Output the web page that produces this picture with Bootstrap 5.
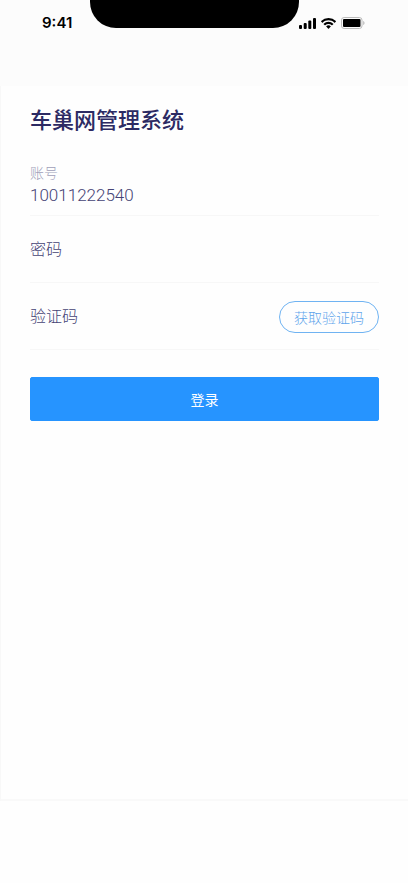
<!DOCTYPE html>
<html lang="zh-CN">
<head>
<meta charset="utf-8">
<meta name="viewport" content="width=device-width, initial-scale=1">
<title>车巢网管理系统</title>
<link href="https://cdn.jsdelivr.net/npm/bootstrap@5.3.0/dist/css/bootstrap.min.css" rel="stylesheet">
<style>
  body { font-family: "Noto Sans CJK SC", sans-serif; background: #fefefe; color: #454375; }
  .top-area { background: #fcfcfc; height: 86px; }
  .status-bar { padding: 12px 43px 0 42px; }
  .clock { font: 600 15px/22px Inter, sans-serif; color: #000; }
  .notch { width: 209px; height: 28px; left: 90px; background: #000; border-radius: 0 0 26px 26px; }
  .status-icons { gap: 5px; }
  .login-panel { padding: 16px 29px 0 29px; border-left: 1px solid #f8f8f8; border-bottom: 2px solid #f9f9f9; background: #fefefe; }
  .home-area { height: 82px; }
  .app-title { font-size: 22px; line-height: 32px; font-weight: 500; color: #2c2a63; margin-bottom: 15px; }
  .field-row { height: 67px; border-bottom: 1px solid #f7f7f7; font-weight: 300; font-size: 16px; line-height: 24px; padding-bottom: 3px; }
  .field-row label { flex: none; }
  .field-row .form-control { color: #454375; font-weight: 300; min-width: 0; box-shadow: none; }
  .field-row.account-row { padding-bottom: 8px; }
  .account-label { font-size: 14px; line-height: 22px; color: #a09fb9; }
  .field-row .account-input { font: 300 17px/24px Roboto, "Noto Sans CJK SC", sans-serif; }
  .code-btn { --bs-btn-color: #5ea5ec; --bs-btn-border-color: #6fb3f2; font-size: 14px; line-height: 20px; font-weight: 300; padding: 5px 14px; flex: none; }
  .login-btn { --bs-btn-bg: #2694ff; --bs-btn-border-color: #2694ff; --bs-btn-color: #fff; margin-top: 27px; height: 44px; font-size: 14px; line-height: 20px; font-weight: 400; border-radius: 2px; }
</style>
<script src="https://cdn.jsdelivr.net/npm/bootstrap@5.3.0/dist/js/bootstrap.bundle.min.js" defer></script>
</head>
<body>
<div class="d-flex flex-column min-vh-100">
  <header class="top-area position-relative">
    <div class="notch position-absolute top-0"></div>
    <div class="status-bar d-flex justify-content-between align-items-center">
      <span class="clock">9:41</span>
      <div class="status-icons d-flex align-items-center">
        <svg width="17" height="11" viewBox="0 0 17 11" aria-hidden="true"><rect x="0" y="7" width="3" height="4" rx="1"/><rect x="4.7" y="5" width="3" height="6" rx="1"/><rect x="9.3" y="2.6" width="3" height="8.4" rx="1"/><rect x="14" y="0" width="3" height="11" rx="1"/></svg>
        <svg width="15" height="11" viewBox="0 0 15.3 11" aria-hidden="true"><path d="M7.65 2.3c2.2 0 4.4.85 6 2.4.12.12.3.12.42 0l1.15-1.2a.33.33 0 0 0 0-.46 10.9 10.9 0 0 0-15.1 0 .33.33 0 0 0 0 .46l1.15 1.2c.12.12.3.12.42 0 1.6-1.55 3.76-2.4 5.96-2.4zm0 3.8c1.2 0 2.4.45 3.3 1.27.12.12.3.12.43 0l1.15-1.2a.34.34 0 0 0 0-.47 7.1 7.1 0 0 0-9.8 0 .34.34 0 0 0 0 .47l1.15 1.2c.12.12.31.12.43 0 .9-.82 2.1-1.27 3.34-1.27zm2.3 2.56a.33.33 0 0 0 0-.48 3.6 3.6 0 0 0-4.6 0 .33.33 0 0 0 0 .48l2.06 2.1a.33.33 0 0 0 .47 0z"/></svg>
        <svg width="24" height="12" viewBox="0 0 24 12" aria-hidden="true"><rect x=".5" y=".5" width="20.5" height="11" rx="2.6" fill="none" stroke="#bbb"/><rect x="2" y="2" width="17.5" height="8" rx="1"/><path d="M22.2 4v4c.8-.3 1.3-1.1 1.3-2s-.5-1.7-1.3-2z" fill="#bbb"/></svg>
      </div>
    </div>
  </header>
  <main class="login-panel flex-grow-1">
    <h1 class="app-title">车巢网管理系统</h1>
    <form>
      <div class="field-row account-row d-flex flex-column justify-content-end">
        <label class="account-label" for="account">账号</label>
        <input class="form-control account-input border-0 rounded-0 bg-transparent p-0" id="account" type="text" inputmode="numeric" value="10011222540">
      </div>
      <div class="field-row d-flex align-items-center">
        <label for="password">密码</label>
        <input class="form-control border-0 bg-transparent py-0" id="password" type="password">
      </div>
      <div class="field-row d-flex align-items-center">
        <label for="code">验证码</label>
        <input class="form-control border-0 bg-transparent py-0" id="code" type="text" inputmode="numeric">
        <button class="btn code-btn rounded-pill mt-1" type="button">获取验证码</button>
      </div>
      <button class="btn login-btn w-100" type="submit">登录</button>
    </form>
  </main>
  <div class="home-area"></div>
</div>
</body>
</html>
